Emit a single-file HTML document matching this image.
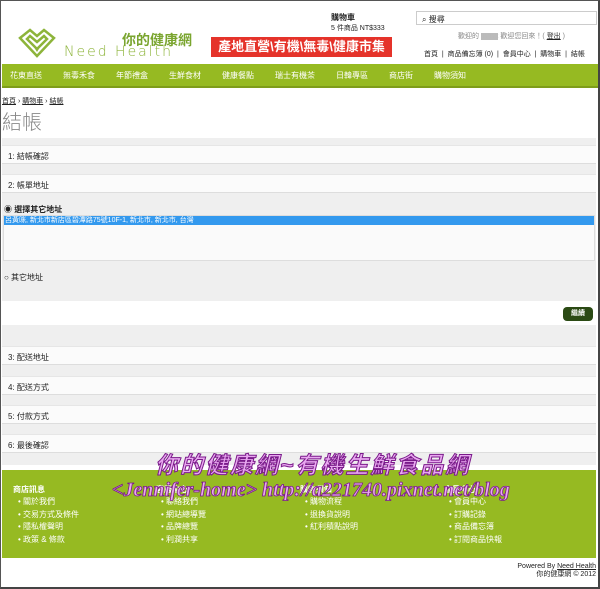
<!DOCTYPE html>
<html><head><meta charset="utf-8"><style>
*{margin:0;padding:0;box-sizing:border-box}
body{width:600px;height:589px;overflow:hidden;background:#fff;font-family:"Liberation Sans","Noto Sans CJK TC",sans-serif;font-size:8px;color:#222;position:relative}
.a{position:absolute}
.frame{left:0;top:0;width:600px;height:589px;border:1px solid #555;border-right:2px solid #444;border-bottom:2px solid #444}
.box{position:absolute;left:2px;width:594px;height:19px;background:#fbfbfb;border-top:1px solid #e6e6e6;border-bottom:1px solid #ddd;padding:5px 0 0 6px;font-size:8px}
.nav span{margin-right:21px;color:#fff;font-size:8px}
.f{color:#fff;font-size:8px;line-height:12.5px}
</style></head><body>
<div class="a frame"></div>
<svg class="a" style="left:14px;top:28px" width="46" height="32" viewBox="0 0 46 32"><g fill="none" stroke="#8db43a" stroke-width="2.5"><path d="M6 10 L16 2 L23 8 L30 2 L40 10 L23 28 Z"/><path d="M13 11 L16 8 L23 14 L30 8 L33 11 L23 21 Z"/></g><path d="M18 16 L23 20 L28 16 L23 24Z" fill="#8db43a"/></svg>
<div class="a" style="left:122px;top:30px;font-size:14px;color:#7aa52f;font-weight:bold">你的健康網</div>
<div class="a" style="left:64px;top:44px;font-size:14px;color:#8db43a;letter-spacing:2px;font-family:'DejaVu Sans',sans-serif;font-weight:200">Need Health</div>
<div class="a" style="left:211px;top:37px;width:181px;height:20px;background:#e5332a;color:#fff;font-size:13px;font-weight:bold;text-align:center;line-height:20px">產地直營\有機\無毒\健康市集</div>
<div class="a" style="left:331px;top:12px;font-size:8px;font-weight:bold">購物車</div>
<div class="a" style="left:331px;top:23px;font-size:7px">5 件商品 NT$333</div>
<div class="a" style="left:416px;top:11px;width:181px;height:14px;border:1px solid #ccc;padding:2px 0 0 5px;font-size:8px">⌕ 搜尋</div>
<div class="a" style="left:458px;top:31px;font-size:7px;color:#888">歡迎的 <span style="background:#bbb;color:#bbb">xxxxx</span> 歡迎您回來！( <u style="color:#222">登出</u> )</div>
<div class="a" style="left:424px;top:49px;font-size:7px;color:#222">首頁 &nbsp;|&nbsp; 商品備忘簿 (0) &nbsp;|&nbsp; 會員中心 &nbsp;|&nbsp; 購物車 &nbsp;|&nbsp; 結帳</div>
<div class="a nav" style="left:2px;top:64px;width:596px;height:24px;background:#96ba22;border-bottom:2px solid #7e9d1a;padding:6px 0 0 8px"><span>花東直送</span><span>無毒禾食</span><span>年節禮盒</span><span>生鮮食材</span><span>健康餐點</span><span>瑞士有機茶</span><span>日韓專區</span><span>商店街</span><span>購物須知</span></div>
<div class="a" style="left:2px;top:96px;font-size:7px"><u>首頁</u> › <u>購物車</u> › <u>結帳</u></div>
<div class="a" style="left:2px;top:106px;font-size:20px;color:#888;font-weight:300">結帳</div>
<div class="a" style="left:2px;top:138px;width:594px;height:163px;background:#efefef"></div>
<div class="box" style="top:145px">1: 結帳確認</div>
<div class="box" style="top:174px">2: 帳單地址</div>
<div class="a" style="left:4px;top:204px;font-size:8px;font-weight:bold">◉ 選擇其它地址</div>
<div class="a" style="left:3px;top:215px;width:592px;height:46px;background:#fafafa;border:1px solid #ddd"><div style="background:#3399ee;color:#fff;height:9px;font-size:7px;line-height:9px;padding-left:1px">呂黃咪, 新北市新店區碧潭路75號10F-1, 新北市, 新北市, 台灣</div></div>
<div class="a" style="left:4px;top:272px;font-size:8px;color:#222">○ 其它地址</div>
<div class="a" style="left:563px;top:307px;width:30px;height:14px;background:#2b4a14;border-radius:4px;color:#fff;font-size:7px;text-align:center;line-height:14px;font-weight:bold">繼續</div>
<div class="a" style="left:2px;top:325px;width:594px;height:140px;background:#efefef"></div>
<div class="box" style="top:346px">3: 配送地址</div>
<div class="box" style="top:376px">4: 配送方式</div>
<div class="box" style="top:405px">5: 付款方式</div>
<div class="box" style="top:434px">6: 最後確認</div>
<div class="a" style="left:2px;top:470px;width:594px;height:88px;background:#96ba22"></div>
<div class="a f" style="left:13px;top:484px;font-weight:bold">商店訊息</div>
<div class="a f" style="left:18px;top:496px">• 關於我們<br>• 交易方式及條件<br>• 隱私權聲明<br>• 政策 &amp; 條款</div>
<div class="a f" style="left:156px;top:484px;font-weight:bold">客服中心</div>
<div class="a f" style="left:161px;top:496px">• 聯絡我們<br>• 網站總導覽<br>• 品牌總覽<br>• 利潤共享</div>
<div class="a f" style="left:300px;top:484px;font-weight:bold">購物須知</div>
<div class="a f" style="left:305px;top:496px">• 購物流程<br>• 退換貨說明<br>• 紅利積點說明</div>
<div class="a f" style="left:444px;top:484px;font-weight:bold">會員中心</div>
<div class="a f" style="left:449px;top:496px">• 會員中心<br>• 訂購記錄<br>• 商品備忘簿<br>• 訂閱商品快報</div>
<div class="a" style="left:155px;top:446px;font-size:23px;font-weight:bold;font-style:italic;color:#e9a8f0;-webkit-text-stroke:1px #7a1a8a;letter-spacing:2px">你的健康網~有機生鮮食品網</div>
<div class="a" style="left:112px;top:479px;font-size:20px;font-weight:bold;font-style:italic;font-family:'Liberation Serif',serif;color:#e9a8f0;-webkit-text-stroke:0.8px #7a1a8a">&lt;Jennifer-home&gt; http://a221740.pixnet.net/blog</div>
<div class="a" style="left:500px;top:563px;width:96px;text-align:right;font-size:7px;line-height:8px">Powered By <u>Need Health</u><br>你的健康網 © 2012</div>
</body></html>
